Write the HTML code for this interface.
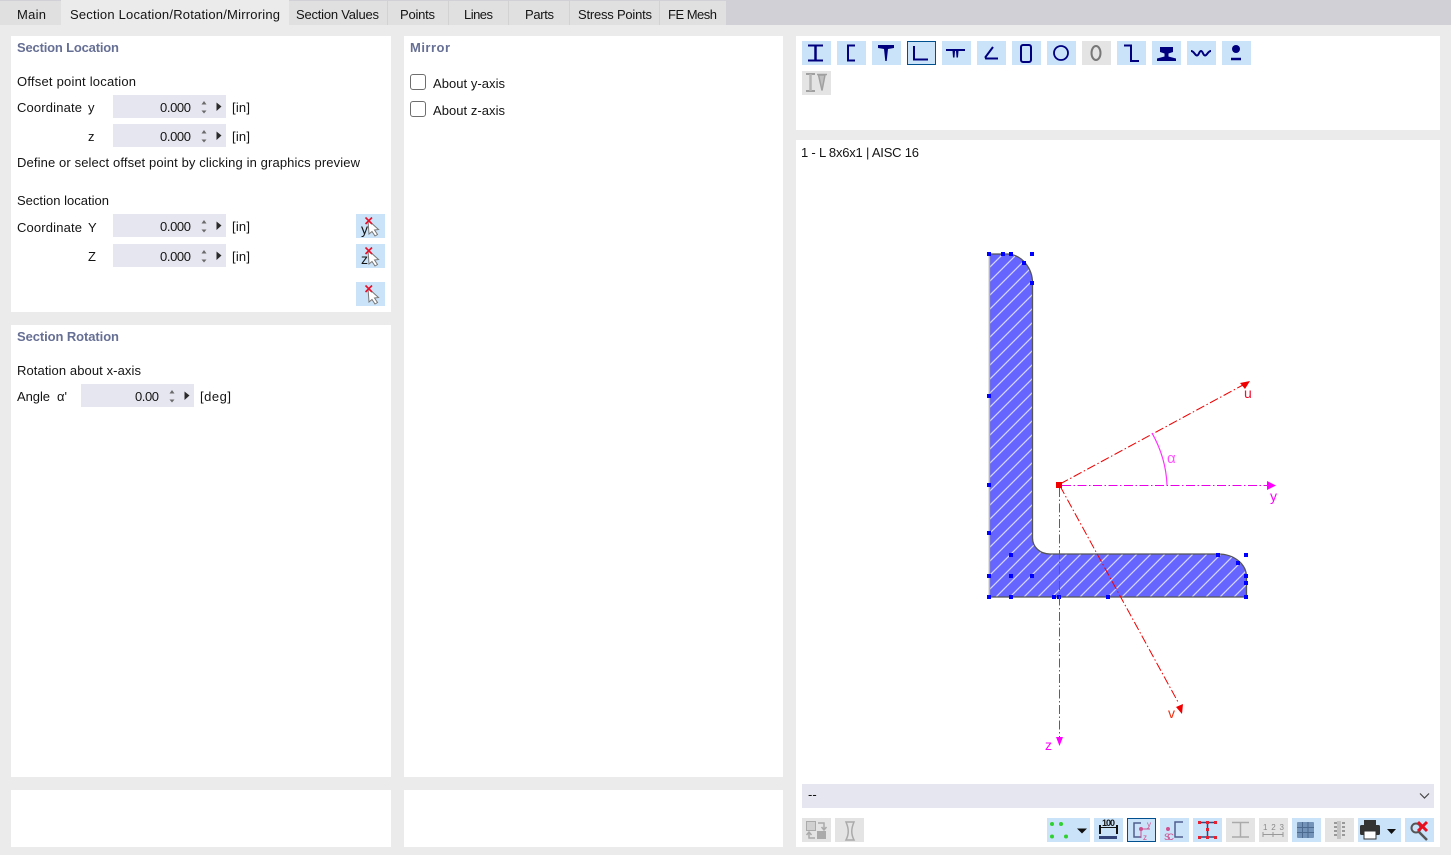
<!DOCTYPE html>
<html><head><meta charset="utf-8"><title>Section</title>
<style>
html,body{margin:0;padding:0;background:#ebebeb;width:1451px;height:855px;overflow:hidden}
svg{display:block}
text{font-family:"Liberation Sans",sans-serif;font-size:13px;fill:#141414}
.h{font-weight:bold;fill:#666f94}
.m{fill:#ff00ff;font-size:14px}
.r{fill:#f01030;font-size:14px}
</style></head><body>
<svg width="1451" height="855" viewBox="0 0 1451 855" xmlns="http://www.w3.org/2000/svg">
<defs>
<pattern id="hatch" patternUnits="userSpaceOnUse" width="14" height="14" x="989" y="254">
<rect width="14" height="14" fill="#6666ff"/>
<path d="M-1 15L15 -1M-1 1L1 -1M13 15L15 13" stroke="#d6d6ff" stroke-width="1.200" fill="none"/>
</pattern>
<g id="spin">
<path d="M-2.500 -2.500L0 -6L2.500 -2.500Z M-2.500 3.500L0 6.500L2.500 3.500Z" fill="#6a6a6a"/>
<path d="M12.500 -4.500V4L17.500 -.5Z" fill="#2a2a2a"/>
</g>
<g id="cur">
<path d="M12 6L22.500 15.500L18.500 16L21.500 20.500L19 22L16 17.500L13 20Z" fill="#fff" stroke="#777" stroke-width="1"/>
<path d="M9.500 3.500L16 10M16 3.500L9.500 10" stroke="#e8102a" stroke-width="1.600"/>
</g>
<rect id="bb" width="29" height="24" fill="#cbe3f8" stroke="none"/>
<rect id="bg" width="29" height="24" fill="#e4e4e4" stroke="none"/>
<rect id="d" x="-2" y="-2" width="4" height="4" fill="#0000ff"/>
</defs>

<!-- tab bar -->
<rect width="1451" height="25" fill="#d0d0d6"/>
<rect x="0" y="1" width="726" height="24" fill="#e0e0e0"/>
<rect x="61" y="0" width="228" height="25" fill="#ebebeb"/>
<path d="M387.500 1V25M448.500 1V25M508.500 1V25M569.500 1V25M659.500 1V25" stroke="#d2d2d2"/>
<text x="17" y="19" textLength="29">Main</text>
<text x="70" y="19" textLength="210">Section Location/Rotation/Mirroring</text>
<text x="296" y="19" textLength="83">Section Values</text>
<text x="400" y="19" textLength="35">Points</text>
<text x="464" y="19" textLength="29">Lines</text>
<text x="525" y="19" textLength="29">Parts</text>
<text x="578" y="19" textLength="74">Stress Points</text>
<text x="668" y="19" textLength="49">FE Mesh</text>

<!-- panels -->
<g fill="#fff">
<rect x="11" y="36" width="380" height="276"/>
<rect x="11" y="325" width="380" height="452"/>
<rect x="11" y="790" width="380" height="57"/>
<rect x="404" y="36" width="379" height="741"/>
<rect x="404" y="790" width="379" height="57"/>
<rect x="796" y="36" width="644" height="94"/>
<rect x="796" y="140" width="644" height="707"/>
</g>

<!-- section location -->
<text class="h" x="17" y="52" textLength="102">Section Location</text>
<text x="17" y="86" textLength="119">Offset point location</text>
<text x="17" y="112" textLength="65">Coordinate</text>
<text x="88" y="112">y</text>
<text x="88" y="141">z</text>
<g fill="#e6e6f0">
<rect x="113" y="95" width="113" height="23"/>
<rect x="113" y="124" width="113" height="23"/>
<rect x="113" y="214" width="113" height="23"/>
<rect x="113" y="244" width="113" height="23"/>
<rect x="81" y="384" width="113" height="23"/>
</g>
<text x="160" y="112" textLength="31">0.000</text>
<text x="160" y="141" textLength="31">0.000</text>
<text x="160" y="231" textLength="31">0.000</text>
<text x="160" y="261" textLength="31">0.000</text>
<text x="135" y="401" textLength="24">0.00</text>
<use href="#spin" x="204" y="107"/>
<use href="#spin" x="204" y="136"/>
<use href="#spin" x="204" y="226"/>
<use href="#spin" x="204" y="256"/>
<use href="#spin" x="172" y="396"/>
<text x="232" y="112" textLength="18">[in]</text>
<text x="232" y="141" textLength="18">[in]</text>
<text x="232" y="231" textLength="18">[in]</text>
<text x="232" y="261" textLength="18">[in]</text>
<text x="200" y="401" textLength="31">[deg]</text>
<text x="17" y="167" textLength="343">Define or select offset point by clicking in graphics preview</text>
<text x="17" y="205" textLength="92">Section location</text>
<text x="17" y="232" textLength="65">Coordinate</text>
<text x="88" y="232">Y</text>
<text x="88" y="261">Z</text>
<use href="#bb" x="356" y="214"/><use href="#cur" x="356" y="214"/><text x="361" y="234" style="font-size:14px">y</text>
<use href="#bb" x="356" y="244"/><use href="#cur" x="356" y="244"/><text x="361" y="264" style="font-size:14px">z</text>
<use href="#bb" x="356" y="282"/><use href="#cur" x="356" y="282"/>

<text class="h" x="17" y="341" textLength="102">Section Rotation</text>
<text x="17" y="375" textLength="124">Rotation about x-axis</text>
<text x="17" y="401" textLength="33">Angle</text>
<text x="57" y="401" textLength="10">α'</text>

<!-- mirror -->
<text class="h" x="410" y="52" textLength="40">Mirror</text>
<rect x="410.500" y="74.500" width="15" height="15" rx="2.500" fill="#fff" stroke="#6e6e6e"/>
<rect x="410.500" y="101.500" width="15" height="15" rx="2.500" fill="#fff" stroke="#6e6e6e"/>
<text x="433" y="88" textLength="72">About y-axis</text>
<text x="433" y="115" textLength="72">About z-axis</text>

<!-- top toolbar -->
<g fill="none" stroke="#00007f">
<use href="#bb" x="802" y="41"/>
<path d="M808 45.500H823M808 60.500H823" stroke-width="2"/><path d="M815.500 45.500V60.500" stroke-width="2.500"/>
<use href="#bb" x="837" y="41"/>
<path d="M855 45.500H848V60.500H855" stroke-width="2"/>
<use href="#bb" x="872" y="41"/>
<path d="M878 45H894V48L888 49L886.700 61H885.300L884 49L878 48Z" fill="#00007f" stroke="none"/>
<rect x="907.500" y="41.500" width="28" height="23" fill="#cbe3f8" stroke="#00508f" stroke-width="1"/>
<path d="M914 46V59.500H928" stroke-width="2"/>
<use href="#bb" x="942" y="41"/>
<path d="M946 49H965V51H958.500L958 57.500H956.500L956 51H955L954.500 57.500H953L952.500 51H946Z" fill="#00007f" stroke="none"/>
<use href="#bb" x="977" y="41"/>
<path d="M993 47L985.500 57L986 58.500H998" stroke-width="2"/>
<use href="#bb" x="1012" y="41"/>
<rect x="1021" y="45" width="10" height="17" rx="2" stroke-width="2"/>
<use href="#bb" x="1047" y="41"/>
<circle cx="1061" cy="53" r="7" stroke-width="1.800"/>
<use href="#bg" x="1082" y="41"/>
<ellipse cx="1096" cy="53" rx="4.500" ry="7" stroke="#777" stroke-width="2"/>
<use href="#bb" x="1117" y="41"/>
<path d="M1124 45.500H1131V61H1139" stroke-width="2"/>
<use href="#bb" x="1152" y="41"/>
<path d="M1160 47H1173V52L1168.500 53.500V56.500L1176 58.500V61H1157V58.500L1164.500 56.500V53.500L1160 52Z" fill="#00007f" stroke="none"/>
<use href="#bb" x="1187" y="41"/>
<path d="M1191 51C1194 51 1195 55.500 1197 55.500C1199 55.500 1199 51 1201 51C1203 51 1203 55.500 1205 55.500C1207 55.500 1208 51 1211 51" stroke-width="2"/>
<use href="#bb" x="1222" y="41"/>
<circle cx="1236" cy="49" r="4" fill="#00007f" stroke="none"/>
<path d="M1231 59H1241" stroke-width="2.500"/>
<use href="#bg" x="802" y="71"/>
<path d="M806 74H815M806 91H815" stroke="#a0a0a0" stroke-width="2"/><path d="M810.500 74V91" stroke="#b5b5b5" stroke-width="2.500"/>
<path d="M817 74.500H827M818.500 75L822 90.500L825 75Z" fill="#c0c0c0" stroke="#a0a0a0" stroke-width="1.500"/>
</g>

<!-- title -->
<text x="801" y="157" textLength="118">1 - L 8x6x1 | AISC 16</text>

<!-- section -->
<path d="M989.500 254H1008C1022 255 1032.500 268 1032.500 283V538C1032.500 547 1040 554 1050 554H1218C1234 554 1246.500 564 1246.500 577V597H989.500Z" fill="url(#hatch)" stroke="#555" stroke-width="1.300"/>
<path d="M989.500 254V597" stroke="#b5b5b5" stroke-width="1.300"/>
<g>
<use href="#d" x="989" y="254"/><use href="#d" x="1003" y="254"/><use href="#d" x="1011" y="254"/><use href="#d" x="1032" y="254"/>
<use href="#d" x="1024" y="263"/><use href="#d" x="1032" y="283"/><use href="#d" x="989" y="396"/><use href="#d" x="989" y="485"/>
<use href="#d" x="989" y="533"/><use href="#d" x="1011" y="555"/><use href="#d" x="989" y="576"/><use href="#d" x="1011" y="576"/>
<use href="#d" x="1032" y="576"/><use href="#d" x="989" y="597"/><use href="#d" x="1011" y="597"/><use href="#d" x="1054" y="597"/>
<use href="#d" x="1059" y="597"/><use href="#d" x="1108" y="597"/><use href="#d" x="1218" y="555"/><use href="#d" x="1246" y="555"/>
<use href="#d" x="1238" y="563"/><use href="#d" x="1246" y="576"/><use href="#d" x="1246" y="583"/><use href="#d" x="1246" y="597"/>
</g>
<g fill="none" stroke-width="1" stroke-dasharray="9 2.500 1.500 2.500">
<path d="M1062 485.500H1268M1059.500 488V738" stroke="#e800e8"/>
<path d="M1060 484L1243 385M1060 486L1178 702" stroke="#f00000"/>
</g>
<path d="M1152 433Q1166 458 1167 485" fill="none" stroke="#ff30ff" stroke-width="1.200"/>
<path d="M1267 481L1276 485.500L1267 490Z M1056 737L1059.500 746L1063 737Z" fill="#ff00ff"/>
<path d="M1240 383L1250 381L1245 389Z M1176 707L1183 704L1182 714Z" fill="#f00000"/>
<rect x="1056" y="482" width="6" height="6" fill="#f00000"/>
<text class="r" x="1244" y="398">u</text>
<text class="r" x="1168" y="718" style="fill:#f03010">v</text>
<text class="m" x="1270" y="501">y</text>
<text class="m" x="1045" y="750">z</text>
<text class="m" x="1167" y="463" style="fill:#ff50ff;font-size:15px">α</text>

<!-- combo -->
<rect x="802" y="784" width="632" height="24" fill="#e6e6f0"/>
<text x="808" y="799">--</text>
<path d="M1420 793.500L1424.500 798L1429 793.500" fill="none" stroke="#444" stroke-width="1.200"/>

<!-- bottom toolbar -->
<use href="#bg" x="802" y="818"/>
<path d="M806.500 821.500H815.500V830.500H806.500Z" fill="#d0d0d0" stroke="#aaa"/>
<path d="M818 823H824V829M821.500 827L824 830L826.500 827" fill="none" stroke="#aaa" stroke-width="1.500"/>
<path d="M815 838H809V833M806.500 835L809 832L811.500 835" fill="none" stroke="#aaa" stroke-width="1.500"/>
<rect x="817" y="831" width="9" height="8" fill="#aaa"/>
<use href="#bg" x="835" y="818"/>
<path d="M846 822H854C851 829 851 834 854 840H846C849 834 849 829 846 822Z" fill="none" stroke="#aaa" stroke-width="1.500"/>

<rect x="1047" y="818" width="43" height="24" fill="#cbe3f8"/>
<g fill="#30d030"><circle cx="1052" cy="824" r="2"/><circle cx="1061" cy="824" r="2"/><circle cx="1052" cy="836.500" r="2"/><circle cx="1066" cy="836.500" r="2"/></g>
<path d="M1077 828.500H1087L1082 833.500Z" fill="#111"/>

<use href="#bb" x="1094" y="818"/>
<path d="M1100 825V834M1117 825V834" stroke="#111" stroke-width="2"/>
<path d="M1100 827.500H1117" stroke="#111"/>
<rect x="1099" y="836" width="18" height="3" fill="#33447a"/>
<text x="1102" y="826" style="font-size:9px;font-weight:bold" textLength="13">100</text>

<rect x="1127.500" y="818.500" width="28" height="23" fill="#cbe3f8" stroke="#00508f"/>
<path d="M1141 823H1134V837H1141" fill="none" stroke="#4f5f8f" stroke-width="1.500"/>
<circle cx="1141" cy="829" r="2" fill="#d04f90"/>
<path d="M1141 829H1150M1141 829V838" stroke="#d04f90"/>
<text x="1147" y="827" style="font-size:8px;fill:#d04f90">y</text>
<text x="1143" y="840" style="font-size:8px;fill:#d04f90">z</text>

<use href="#bb" x="1160" y="818"/>
<path d="M1183 822H1175V837H1183" fill="none" stroke="#4f5f8f" stroke-width="1.500"/>
<circle cx="1168" cy="829" r="2" fill="#d04f90"/>
<text x="1164" y="840" style="font-size:9.500px;fill:#d04f90" textLength="10">SC</text>

<use href="#bb" x="1193" y="818"/>
<path d="M1199 822.500H1216M1199 837H1216M1207.500 822V837" stroke="#334a80" stroke-width="1.500"/>
<g fill="#e82030"><rect x="1198" y="821" width="3" height="3"/><rect x="1206" y="821" width="3" height="3"/><rect x="1214" y="821" width="3" height="3"/><rect x="1206" y="828" width="3" height="3"/><rect x="1198" y="836" width="3" height="3"/><rect x="1206" y="836" width="3" height="3"/><rect x="1214" y="836" width="3" height="3"/></g>

<use href="#bg" x="1226" y="818"/>
<path d="M1232 822.500H1249M1232 837H1249M1240.500 822V837" stroke="#aaa" stroke-width="1.500"/>

<use href="#bg" x="1259" y="818"/>
<text x="1263" y="830" style="font-size:8px;fill:#888" textLength="21">1 2 3</text>
<path d="M1263 834.500H1283M1263 832V837M1273 832V837M1283 832V837" stroke="#999"/>

<use href="#bb" x="1292" y="818"/>
<rect x="1297" y="822" width="17" height="16" rx="1" fill="#7393b8"/>
<path d="M1297 827.500H1314M1297 832.500H1314M1302.500 822V838M1308 822V838" stroke="#4c6a90"/>

<use href="#bg" x="1325" y="818"/>
<path d="M1334 823H1345M1334 827H1345M1334 831H1345M1334 835H1345" stroke="#999" stroke-width="2" stroke-dasharray="3 1"/>
<rect x="1337" y="821" width="4" height="18" fill="#c4c4c4"/>

<rect x="1358" y="818" width="43" height="24" fill="#cbe3f8"/>
<path d="M1364 820H1376V826H1364Z" fill="#333"/>
<rect x="1360" y="825" width="20" height="10" rx="1.500" fill="#333"/>
<rect x="1364" y="831" width="12" height="8" fill="#fff" stroke="#333"/>
<path d="M1387 829H1396L1391.500 834Z" fill="#111"/>

<use href="#bb" x="1405" y="818"/>
<circle cx="1416" cy="828" r="4.500" fill="none" stroke="#555" stroke-width="2"/>
<path d="M1419 832L1427 840" stroke="#555" stroke-width="2.500"/>
<path d="M1418 822L1427 831M1427 822L1418 831" stroke="#e81020" stroke-width="3"/>
</svg>
</body></html>
